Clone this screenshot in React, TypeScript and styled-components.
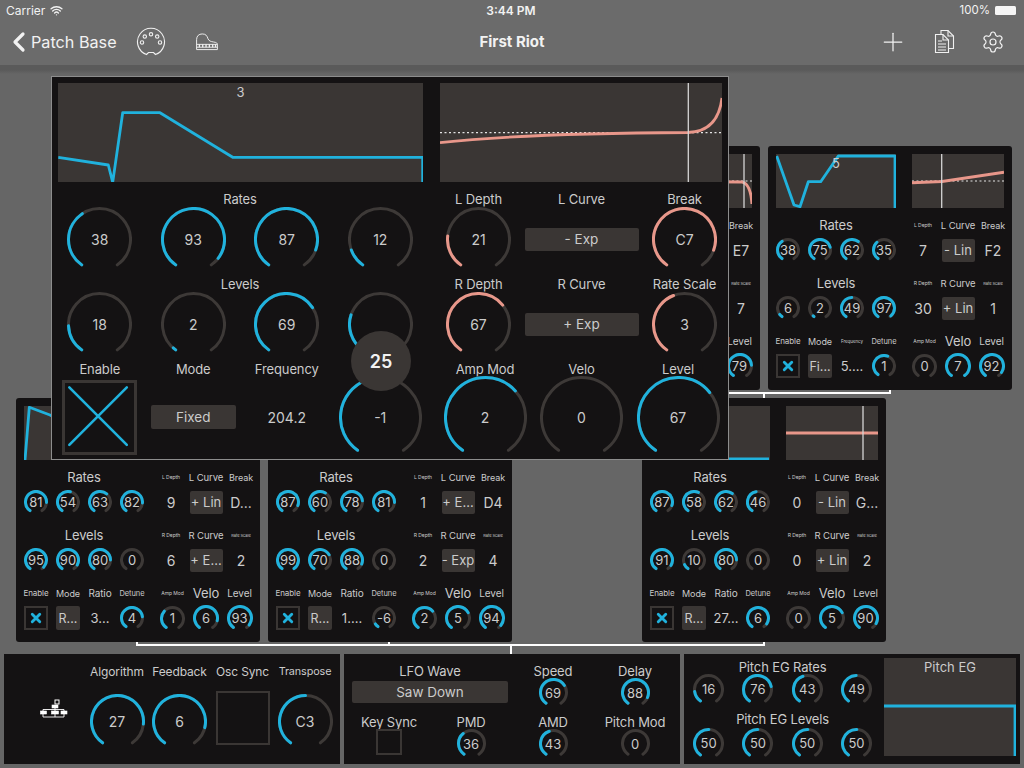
import React from "react";
import styled, { createGlobalStyle } from "styled-components";
import { ChevronLeft, Plus, Settings, Wifi } from "lucide-react";

const BLUE = "#20b2dd";
const SALMON = "#e8978a";
const TRACK = "#3d3937";
const PANEL = "#141213";
const WELL = "#3a3634";
const TEXT = "#cbcbcb";

const GlobalStyle = createGlobalStyle`
  html, body { margin: 0; padding: 0; background: #666; }
  body { font-family: Inter, "Open Sans", sans-serif; color: ${TEXT}; }
  * { box-sizing: border-box; }
`;

/* ===== styled-components used by other styles ===== */

const Section = styled.div<{ $big: boolean }>`
  display: flex;
  flex-direction: column;
  gap: ${({ $big }) => ($big ? "5px" : "8px")};
  flex: none;
`;

const Cols3 = styled.div<{ $big: boolean; $tight?: boolean }>`
  display: grid;
  justify-content: center;
  width: ${({ $big }) => ($big ? "309px" : "105px")};
  grid-template-rows: minmax(0, 1fr);
  grid-template-columns: repeat(3, ${({ $big, $tight }) =>
    $big ? ($tight ? "96.5px" : "103px") : $tight ? "33.5px" : "35px"});
`;

const Cell = styled.div`
  display: flex;
  align-items: center;
  justify-content: center;
  min-width: 0;
  min-height: 0;
`;

/* ===== little drawings ===== */

const polar = (c: number, r: number, deg: number) => {
  const a = ((deg - 90) * Math.PI) / 180;
  return [c + r * Math.cos(a), c + r * Math.sin(a)];
};

const arc = (c: number, r: number, from: number, to: number) => {
  const [x1, y1] = polar(c, r, from);
  const [x2, y2] = polar(c, r, to);
  return `M${x1} ${y1} A${r} ${r} 0 ${to - from > 180 ? 1 : 0} 1 ${x2} ${y2}`;
};

// knob ring runs 290deg with the gap at the bottom
const Ring = ({ size, stroke, frac, color }: { size: number; stroke: number; frac: number; color: string }) => {
  const c = size / 2;
  const r = c - stroke / 2;
  const end = -145 + 290 * frac;
  return (
    <RingSvg width={size} height={size}>
      <path d={arc(c, r, -145, 145)} fill="none" stroke={TRACK} strokeWidth={stroke} strokeLinecap="round" />
      {frac > 0 && <path d={arc(c, r, -145, end)} fill="none" stroke={color} strokeWidth={stroke} strokeLinecap="round" />}
    </RingSvg>
  );
};

type KnobProps = { size: number; frac: number; value?: string | number; color?: string; font: number };

const Knob = ({ size, frac, value, color = BLUE, font }: KnobProps) => (
  <KnobBox $size={size} $font={font}>
    <Ring size={size} stroke={3} frac={frac} color={color} />
    {value}
  </KnobBox>
);

const CheckBox = ({ size, checked, big }: { size: number; checked?: boolean; big?: boolean }) => (
  <Check $size={size} $big={big}>
    {checked && (
      <svg width="100%" height="100%" viewBox="0 0 24 24">
        {big ? (
          <path d="M1.5 1.5L21.5 21.5M21.5 1.5L1.5 21.5" stroke={BLUE} strokeWidth="0.9" strokeLinecap="round" />
        ) : (
          <path d="M7.5 7.5L16.5 16.5M16.5 7.5L7.5 16.5" stroke={BLUE} strokeWidth="3.4" strokeLinecap="round" />
        )}
      </svg>
    )}
  </Check>
);

const EnvGraph = ({ w, h, points, label }: { w: number; h: number; points: string; label?: string }) => (
  <Graph $w={w} $h={h}>
    <svg width={w} height={h}>
      <polyline points={points} fill="none" stroke={BLUE} strokeWidth="2.8" strokeLinejoin="round" />
    </svg>
    {label && <GraphLabel>{label}</GraphLabel>}
  </Graph>
);

const CurveGraph = ({ w, h, curve, mid, brk, big }: { w: number; h: number; curve: string; mid: number; brk: number; big?: boolean }) => (
  <Graph $w={w} $h={h}>
    <svg width={w} height={h}>
      <line x1={0} x2={w} y1={mid} y2={mid} stroke="#e4e4e4" strokeWidth="1.2" strokeDasharray="2 2.5" />
      <path d={curve} fill="none" stroke={SALMON} strokeWidth={big ? 2.8 : 3} />
      <line x1={brk} x2={brk} y1={0} y2={h} stroke="#d5d5d5" strokeWidth="1.3" />
    </svg>
  </Graph>
);

/* ===== operator panel ===== */

type Op = {
  x: number;
  y: number;
  covered?: boolean;
  env: string;
  envLabel?: string;
  curve: string;
  brk: number;
  rates: number[];
  levels: number[];
  mode: string;
  freq: string;
  detune: number;
  lDepth: number;
  lCurve: string;
  brkNote: string;
  rDepth: number;
  rCurve: string;
  rateScale: number;
  ampMod: number;
  velo: number;
  level: number;
  freqFont?: number;
};

const ops: Op[] = [
  {
    // mostly hidden by the big panel, only the right edge shows
    x: 516, y: 146, covered: true, env: "0,54 30,10 70,10 119,40 119,54", curve: "M0 27.5 L82 28 C88 29 91 36 92 50", brk: 84,
    rates: [70, 60, 50, 40], levels: [99, 80, 60, 0], mode: "R...", freq: "1...", detune: 0,
    lDepth: 0, lCurve: "- Lin", brkNote: "E7", rDepth: 0, rCurve: "+ Lin", rateScale: 7, ampMod: 0, velo: 5, level: 79,
  },
  {
    x: 768, y: 146, env: "0.7,2 18,51 24,52.7 32.3,27.7 44.7,27.7 62.3,2 119,2 119,54", envLabel: "5",
    curve: "M0 28.7 L30 27.5 L92 18.3", brk: 29.7,
    rates: [38, 75, 62, 35], levels: [6, 2, 49, 97], mode: "Fi...", freq: "5....", detune: 1,
    lDepth: 7, lCurve: "- Lin", brkNote: "F2", rDepth: 30, rCurve: "+ Lin", rateScale: 1, ampMod: 0, velo: 7, level: 92, freqFont: 4.5,
  },
  {
    x: 16, y: 398, env: "1,54 5.3,1.3 26,9 60,27 118,27 118,54", curve: "M0 27 L92 27", brk: 60,
    rates: [81, 54, 63, 82], levels: [95, 90, 80, 0], mode: "R...", freq: "3...", detune: 4,
    lDepth: 9, lCurve: "+ Lin", brkNote: "D...", rDepth: 6, rCurve: "+ E...", rateScale: 2, ampMod: 1, velo: 6, level: 93,
  },
  {
    x: 268, y: 398, env: "0,54 20,8 60,8 90,27 119,27 119,54", curve: "M0 27 L92 27", brk: 50,
    rates: [87, 60, 78, 81], levels: [99, 70, 88, 0], mode: "R...", freq: "1....", detune: -6,
    lDepth: 1, lCurve: "+ E...", brkNote: "D4", rDepth: 2, rCurve: "- Exp", rateScale: 4, ampMod: 2, velo: 5, level: 94,
  },
  {
    x: 642, y: 398, env: "0,53 119,53", curve: "M0 27 L92 27", brk: 77,
    rates: [87, 58, 62, 46], levels: [91, 10, 80, 0], mode: "R...", freq: "27...", detune: 6,
    lDepth: 0, lCurve: "- Lin", brkNote: "G...", rDepth: 0, rCurve: "+ Lin", rateScale: 2, ampMod: 0, velo: 5, level: 90,
  },
];

const MiniOp = ({ op }: { op: Op }) => {
  const k = (v: number) => <Knob size={24} font={13} frac={v / 99} value={v} />;
  return (
    <Window $x={op.x} $y={op.y} $w={244} $h={244} $big={false}>
      <GraphRow $big={false}>
        <EnvGraph w={120} h={54} points={op.env} label={op.envLabel} />
        <CurveGraph w={92} h={54} curve={op.curve} mid={27} brk={op.brk} />
      </GraphRow>
      <Body $big={false} $covered={op.covered}>
        <Section $big={false}>
          <Group $big={false}>
            <Title $size={13}>Rates</Title>
            <Cols $big={false}>{op.rates.map((v, i) => <Cell key={i}>{k(v)}</Cell>)}</Cols>
          </Group>
          <Group $big={false}>
            <Title $size={13}>Levels</Title>
            <Cols $big={false}>{op.levels.map((v, i) => <Cell key={i}>{k(v)}</Cell>)}</Cols>
          </Group>
          <Group $big={false}>
            <Cols $big={false}>
              <Title $size={8}>Enable</Title>
              <Title $size={9}>Mode</Title>
              <Title $size={op.freqFont ?? 10}>{op.freqFont ? "Frequency" : "Ratio"}</Title>
              <Title $size={7.5}>Detune</Title>
            </Cols>
            <Cols $big={false}>
              <Cell><CheckBox size={24} checked /></Cell>
              <Cell><MiniMode>{op.mode}</MiniMode></Cell>
              <Cell><Value $size={13}>{op.freq}</Value></Cell>
              <Cell><Knob size={24} font={13} frac={(op.detune + 7) / 14} value={op.detune} /></Cell>
            </Cols>
          </Group>
        </Section>
        <Section $big={false}>
          <Group $big={false}>
            <Cols3 $big={false}>
              <Title $size={5}>L Depth</Title>
              <Title $size={9.5}>L Curve</Title>
              <Title $size={9}>Break</Title>
            </Cols3>
            <Cols3 $big={false}>
              <Cell><Value $size={14}>{op.lDepth}</Value></Cell>
              <Cell><CurveBtn $big={false}>{op.lCurve}</CurveBtn></Cell>
              <Cell><Value $size={14}>{op.brkNote}</Value></Cell>
            </Cols3>
          </Group>
          <Group $big={false}>
            <Cols3 $big={false}>
              <Title $size={5}>R Depth</Title>
              <Title $size={9.5}>R Curve</Title>
              <Title $size={4}>Rate Scale</Title>
            </Cols3>
            <Cols3 $big={false}>
              <Cell><Value $size={14}>{op.rDepth}</Value></Cell>
              <Cell><CurveBtn $big={false}>{op.rCurve}</CurveBtn></Cell>
              <Cell><Value $size={14}>{op.rateScale}</Value></Cell>
            </Cols3>
          </Group>
          <Group $big={false}>
            <Cols3 $big={false} $tight>
              <Title $size={5}>Amp Mod</Title>
              <Title $size={13}>Velo</Title>
              <Title $size={10}>Level</Title>
            </Cols3>
            <Cols3 $big={false} $tight>
              <Cell><Knob size={25} font={13} frac={op.ampMod / 3} value={op.ampMod} /></Cell>
              <Cell><Knob size={26} font={13} frac={op.velo / 7} value={op.velo} /></Cell>
              <Cell><Knob size={26} font={13} frac={op.level / 99} value={op.level} /></Cell>
            </Cols3>
          </Group>
        </Section>
      </Body>
    </Window>
  );
};

const BigOp = () => {
  const k = (v: number, show = true) => (
    <Knob size={65} font={14} frac={v / 99} value={show ? v : ""} />
  );
  return (
    <Window $x={51} $y={76} $w={678} $h={384} $big>
      <GraphRow $big>
        <EnvGraph
          w={365}
          h={99}
          label="3"
          points="0.3,74.3 50.3,82 54.7,99.3 64.7,29.7 102,29.7 174.7,74.3 364.7,74.3 364.7,99"
        />
        <CurveGraph w={282} h={99} big mid={49.7} brk={248.3} curve="M0 59.7 C60 53 150 50 248 49.5 C266 49 279 40 282 15" />
      </GraphRow>
      <Body $big>
        <Section $big>
          <Group $big>
            <Title $size={13}>Rates</Title>
            <Cols $big>{[38, 93, 87, 12].map((v) => <Cell key={v}>{k(v)}</Cell>)}</Cols>
          </Group>
          <Group $big>
            <Title $size={13}>Levels</Title>
            <Cols $big>
              <Cell>{k(18)}</Cell>
              <Cell>{k(2)}</Cell>
              <Cell>{k(69)}</Cell>
              <Cell>{k(25, false)}</Cell>
            </Cols>
          </Group>
          <Group $big>
            <Cols $big>
              <Title $size={13}>Enable</Title>
              <Title $size={13}>Mode</Title>
              <Title $size={13}>Frequency</Title>
              <Title $size={13} $under>Detune</Title>
            </Cols>
            <Cols $big>
              <Cell><CheckBox size={75} big checked /></Cell>
              <Cell><FixedBtn>Fixed</FixedBtn></Cell>
              <Cell><Value $size={14}>204.2</Value></Cell>
              <Cell><Knob size={83} font={14} frac={6 / 14} value={-1} /></Cell>
            </Cols>
          </Group>
        </Section>
        <Section $big>
          <Group $big>
            <Cols3 $big>
              <Title $size={13}>L Depth</Title>
              <Title $size={13}>L Curve</Title>
              <Title $size={13}>Break</Title>
            </Cols3>
            <Cols3 $big>
              <Cell><Knob size={65} font={14} frac={21 / 99} value={21} color={SALMON} /></Cell>
              <Cell><CurveBtn $big>- Exp</CurveBtn></Cell>
              <Cell><Knob size={65} font={14} frac={0.88} value="C7" color={SALMON} /></Cell>
            </Cols3>
          </Group>
          <Group $big>
            <Cols3 $big>
              <Title $size={13}>R Depth</Title>
              <Title $size={13}>R Curve</Title>
              <Title $size={13}>Rate Scale</Title>
            </Cols3>
            <Cols3 $big>
              <Cell><Knob size={65} font={14} frac={67 / 99} value={67} color={SALMON} /></Cell>
              <Cell><CurveBtn $big>+ Exp</CurveBtn></Cell>
              <Cell><Knob size={65} font={14} frac={3 / 7} value={3} color={SALMON} /></Cell>
            </Cols3>
          </Group>
          <Group $big>
            <Cols3 $big $tight>
              <Title $size={13}>Amp Mod</Title>
              <Title $size={13}>Velo</Title>
              <Title $size={13}>Level</Title>
            </Cols3>
            <Cols3 $big $tight>
              <Cell><Knob size={83} font={14} frac={2 / 3} value={2} /></Cell>
              <Cell><Knob size={83} font={14} frac={0} value={0} /></Cell>
              <Cell><Knob size={83} font={14} frac={67 / 99} value={67} /></Cell>
            </Cols3>
          </Group>
        </Section>
      </Body>
      <Bubble>25</Bubble>
    </Window>
  );
};

/* ===== app ===== */

export default function App() {
  return (
    <Page>
      <GlobalStyle />
      <Header>
        <StatusBar>
          <StatusLeft>Carrier <Wifi size={13} strokeWidth={2.6} /></StatusLeft>
          <Clock>3:44 PM</Clock>
          <StatusRight>100% <Battery /></StatusRight>
        </StatusBar>
        <NavBar>
          <NavLeft>
            <BackLink><ChevronLeft size={32} strokeWidth={2.4} />Patch Base</BackLink>
            <MidiIcon />
            <PianoIcon />
          </NavLeft>
          <NavTitle>First Riot</NavTitle>
          <NavRight>
            <Plus size={30} strokeWidth={1} />
            <DocsIcon />
            <Settings size={24} strokeWidth={1.2} />
          </NavRight>
        </NavBar>
      </Header>

      <Canvas>
        <Wires width={1024} height={588} viewBox="0 66 1024 588">
          <path
            d="M137 642V645H764V642M389 642V645M511 645V654M640 393H890V390M764 393V398M638 390V393"
            fill="none"
            stroke="#fff"
            strokeWidth="2"
          />
        </Wires>
        {ops.map((op) => <MiniOp key={op.x} op={op} />)}
        <BigOp />
      </Canvas>

      <BottomRow>
        <GlobalPanel>
          <IconCell><AlgoIcon /></IconCell>
          <AlgoCell>
            <Title $size={12}>Algorithm</Title>
            <Knob size={55} font={14} frac={0.83} value={27} />
          </AlgoCell>
          <AlgoCell>
            <Title $size={12}>Feedback</Title>
            <Knob size={55} font={14} frac={6 / 7} value={6} />
          </AlgoCell>
          <AlgoCell $raised>
            <Title $size={12}>Osc Sync</Title>
            <CheckBox size={54} />
          </AlgoCell>
          <AlgoCell>
            <Title $size={10.8}>Transpose</Title>
            <Knob size={55} font={14} frac={0.5} value="C3" />
          </AlgoCell>
        </GlobalPanel>

        <LfoPanel>
          <LfoWave>
            <Title $size={13}>LFO Wave</Title>
            <WaveBtn>Saw Down</WaveBtn>
          </LfoWave>
          <LfoCell>
            <Title $size={13}>Speed</Title>
            <Knob size={29} font={13} frac={69 / 99} value={69} />
          </LfoCell>
          <LfoCell>
            <Title $size={13}>Delay</Title>
            <Knob size={29} font={13} frac={88 / 99} value={88} />
          </LfoCell>
          <KeySync>
            <Title $size={13}>Key Sync</Title>
            <CheckBox size={26} />
          </KeySync>
          <LfoCell>
            <Title $size={13}>PMD</Title>
            <Knob size={29} font={13} frac={36 / 99} value={36} />
          </LfoCell>
          <LfoCell>
            <Title $size={13}>AMD</Title>
            <Knob size={29} font={13} frac={43 / 99} value={43} />
          </LfoCell>
          <LfoCell>
            <Title $size={13}>Pitch Mod</Title>
            <Knob size={29} font={13} frac={0} value={0} />
          </LfoCell>
        </LfoPanel>

        <PitchPanel>
          <PitchKnobs>
            <PitchTitle><Title $size={13}>Pitch EG Rates</Title></PitchTitle>
            {[16, 76, 43, 49].map((v) => (
              <Cell key={v}><Knob size={31} font={13} frac={v / 99} value={v} /></Cell>
            ))}
            <PitchTitle $pushed><Title $size={13}>Pitch EG Levels</Title></PitchTitle>
            {[0, 1, 2, 3].map((i) => (
              <Cell key={i}><Knob size={31} font={13} frac={50 / 99} value={50} /></Cell>
            ))}
          </PitchKnobs>
          <Graph $w={132} $h={98}>
            <svg width={132} height={98}>
              <polyline points="0,48 131,48 131,98" fill="none" stroke={BLUE} strokeWidth="2.8" />
            </svg>
            <GraphLabel>Pitch EG</GraphLabel>
          </Graph>
        </PitchPanel>
      </BottomRow>
    </Page>
  );
}

const MidiIcon = () => (
  <svg width="30" height="30" viewBox="0 0 30 30" fill="none" stroke="#f0f0f0" strokeWidth="1.1">
    <path d="M10.5 27.5A13.5 13.5 0 1 1 19.5 27.5L17.5 25.5H12.5Z" />
    <circle cx="6" cy="15.5" r="1.7" />
    <circle cx="8.8" cy="9.6" r="1.7" />
    <circle cx="15" cy="7.3" r="1.7" />
    <circle cx="21.2" cy="9.6" r="1.7" />
    <circle cx="24" cy="15.5" r="1.7" />
  </svg>
);

const PianoIcon = () => (
  <svg width="24" height="18" viewBox="0 0 24 19" fill="none" stroke="#f0f0f0" strokeWidth="1">
    <path d="M1 17.5V7C1 3 3.5 1 7 1C11 1 12 3 13 6C14 8.5 16 9 19 9.5C22 10 23 10.5 23 12.5V17.5Z" />
    <path d="M1 12H23M1 15H23" />
    <path d="M4 12V15M7.5 12V15M11 12V15M14.5 12V15M18 12V15M21 12V15" strokeWidth="1.4" />
  </svg>
);

const DocsIcon = () => (
  <svg width="21" height="25" viewBox="0 0 21 25" fill="none" stroke="#f0f0f0" strokeWidth="1.1">
    <path d="M7 5V1.5H14L19.5 7V19.5H15" />
    <path d="M14 1.5V7H19.5" />
    <path d="M1.5 5.5H9L14.5 11V23.5H1.5Z" fill="#6a6a6a" />
    <path d="M9 5.5V11H14.5" />
    <path d="M4 12H8M4 15H12M4 18H12M4 21H12" />
  </svg>
);

const AlgoIcon = () => (
  <svg width="28" height="21" viewBox="0 0 28 21" fill="#fff" stroke="#fff">
    <rect x="15" y="1" width="4" height="4" fill="none" strokeWidth="1" />
    <rect x="12" y="6" width="6" height="3" strokeWidth="0.6" />
    <path d="M3 10.5H24M15 9V18M3 10.5V13M24 10.5V13" strokeWidth="0.9" fill="none" />
    <rect x="0.5" y="12" width="6" height="3" strokeWidth="0.6" />
    <rect x="11.5" y="12" width="7" height="3" strokeWidth="0.6" />
    <rect x="21" y="12" width="6" height="3" strokeWidth="0.6" />
    <path d="M3 15V18H24V15" strokeWidth="0.9" fill="none" />
  </svg>
);

/* ===== styled-components ===== */

const Page = styled.div`
  width: 1024px;
  height: 768px;
  display: flex;
  flex-direction: column;
  overflow: hidden;
  background: #666;
`;

const Header = styled.header`
  background: #6b6b6b;
  color: #f2f2f2;
  border-bottom: 1px solid #5a5a5a;
`;

const StatusBar = styled.div`
  height: 20px;
  padding: 0 8px 0 6px;
  display: grid;
  grid-template-columns: 1fr auto 1fr;
  align-items: center;
  font-size: 12px;
`;

const StatusLeft = styled.div`
  display: flex;
  align-items: center;
  gap: 5px;
`;

const Clock = styled.div`
  font-weight: 600;
  font-size: 12px;
`;

const StatusRight = styled.div`
  display: flex;
  justify-content: flex-end;
  align-items: center;
  gap: 5px;
  font-size: 11.5px;
`;

const Battery = styled.span`
  width: 21px;
  height: 9px;
  background: #f5f5f5;
  border-radius: 1.5px;
`;

const NavBar = styled.nav`
  height: 45px;
  padding: 0 19px 2px 19px;
  display: grid;
  grid-template-columns: 1fr auto 1fr;
  align-items: center;
`;

const NavLeft = styled.div`
  display: flex;
  align-items: center;
  gap: 19px;
  margin-left: -15px;
  & > svg:last-child { margin-left: 10px; }
`;

const BackLink = styled.div`
  display: flex;
  align-items: center;
  font-size: 16.2px;
  & > svg { margin-right: -4px; margin-left: -1px; }
`;

const NavTitle = styled.div`
  font-weight: 700;
  font-size: 15px;
`;

const NavRight = styled.div`
  display: flex;
  justify-content: flex-end;
  align-items: center;
  gap: 26px;
`;

const Canvas = styled.main`
  position: relative;
  flex: 1;
  background: linear-gradient(#5a5a5a 0, #5a5a5a 4px, #666 8px);
`;

const Wires = styled.svg`
  position: absolute;
  left: 0;
  top: 0;
  overflow: visible;
`;

const Window = styled.section<{ $x: number; $y: number; $w: number; $h: number; $big: boolean }>`
  position: absolute;
  left: ${({ $x }) => $x}px;
  top: ${({ $y }) => $y - 66}px;
  width: ${({ $w }) => $w}px;
  height: ${({ $h }) => $h}px;
  background: ${PANEL};
  border-radius: ${({ $big }) => ($big ? "0" : "3px")};
  outline: ${({ $big }) => ($big ? "1px solid #8d8d8d" : "none")};
  outline-offset: -1px;
`;

const GraphRow = styled.div<{ $big: boolean }>`
  display: flex;
  justify-content: space-between;
  padding: ${({ $big }) => ($big ? "7px 7px 0" : "8px 8px 0")};
`;

const Graph = styled.div<{ $w: number; $h: number }>`
  position: relative;
  flex: none;
  width: ${({ $w }) => $w}px;
  height: ${({ $h }) => $h}px;
  background: ${WELL};
  & > svg { display: block; }
`;

const GraphLabel = styled.span`
  position: absolute;
  left: 0;
  right: 0;
  top: 1px;
  text-align: center;
  font-size: 13px;
`;

// the panel under the big one only shows its last column
const Body = styled.div<{ $big: boolean; $covered?: boolean }>`
  display: flex;
  padding-left: ${({ $big }) => ($big ? "2px" : "4px")};
  padding-top: ${({ $big }) => ($big ? "5px" : "9px")};
  column-gap: ${({ $big }) => ($big ? "0" : "5.5px")};
  ${({ $covered }) =>
    $covered &&
    `
    & > div:first-child { visibility: hidden; }
    & > div:last-child > div > div > *:not(:last-child) { visibility: hidden; }
  `}
`;

const Group = styled.div<{ $big: boolean }>`
  display: grid;
  grid-template-rows: ${({ $big }) => ($big ? "24px 56px" : "16px 34px")};
  min-height: 0;
  &:last-child { grid-template-rows: ${({ $big }) => ($big ? "24px 72px" : "16px 34px")}; }
`;

const Cols = styled.div<{ $big: boolean }>`
  display: grid;
  grid-template-rows: minmax(0, 1fr);
  grid-template-columns: repeat(4, ${({ $big }) => ($big ? "93.5px" : "32px")});
  min-height: 0;
`;

// $under: the label sits behind the value bubble
const Title = styled.div<{ $size: number; $under?: boolean }>`
  display: flex;
  align-items: center;
  justify-content: center;
  white-space: nowrap;
  font-size: ${({ $size }) => $size}px;
  letter-spacing: -0.01em;
  height: 100%;
  color: ${TEXT};
  ${({ $under }) => $under && "visibility: hidden;"}
`;

const Value = styled.span<{ $size: number }>`
  font-size: ${({ $size }) => $size}px;
  white-space: nowrap;
`;

const KnobBox = styled.div<{ $size: number; $font: number }>`
  position: relative;
  flex: none;
  width: ${({ $size }) => $size}px;
  height: ${({ $size }) => $size}px;
  display: flex;
  align-items: center;
  justify-content: center;
  font-size: ${({ $font }) => $font}px;
  white-space: nowrap;
`;

const RingSvg = styled.svg`
  position: absolute;
  left: 0;
  top: 0;
`;

const Check = styled.div<{ $size: number; $big?: boolean }>`
  flex: none;
  width: ${({ $size }) => $size}px;
  height: ${({ $size }) => $size}px;
  border: ${({ $big }) => ($big ? "3px" : "2px")} solid ${WELL};
  & > svg { display: block; }
`;

const MiniMode = styled.div`
  width: 24px;
  height: 24px;
  background: ${WELL};
  border-radius: 2px;
  display: flex;
  align-items: center;
  justify-content: center;
  font-size: 12.5px;
  white-space: nowrap;
`;

const CurveBtn = styled.div<{ $big: boolean }>`
  flex: none;
  width: ${({ $big }) => ($big ? "114px" : "33px")};
  height: 23px;
  background: ${WELL};
  border-radius: 2px;
  display: flex;
  align-items: center;
  justify-content: center;
  font-size: ${({ $big }) => ($big ? "13.5px" : "13px")};
  white-space: nowrap;
`;

const FixedBtn = styled.div`
  width: 85px;
  height: 24px;
  background: ${WELL};
  border-radius: 2px;
  display: flex;
  align-items: center;
  justify-content: center;
  font-size: 13.5px;
`;

const Bubble = styled.div`
  position: absolute;
  left: 300px;
  top: 255px;
  width: 60px;
  height: 60px;
  border-radius: 50%;
  background: ${WELL};
  color: #f2f2f2;
  font-size: 18px;
  font-weight: 600;
  display: flex;
  align-items: center;
  justify-content: center;
`;

const BottomRow = styled.footer`
  flex: none;
  display: flex;
  gap: 4px;
  padding: 0 4px 4px;
`;

const GlobalPanel = styled.div`
  flex: none;
  width: 336px;
  height: 110px;
  background: ${PANEL};
  display: grid;
  grid-template-columns: 82px 62px 63px 63px 62px;
  padding-top: 8px;
`;

const IconCell = styled.div`
  display: flex;
  align-items: center;
  justify-content: center;
  padding: 0 0 8px 18px;
`;

const AlgoCell = styled.div<{ $raised?: boolean }>`
  display: grid;
  grid-template-rows: 18px 1fr;
  justify-items: center;
  align-items: center;
  padding-bottom: ${({ $raised }) => ($raised ? "9px" : "1px")};
`;

const LfoPanel = styled.div`
  flex: none;
  width: 336px;
  height: 110px;
  background: ${PANEL};
  display: grid;
  grid-template-columns: 82px 82px 82px 82px;
  grid-template-rows: 51px 51px;
  padding: 8px 0 0 4px;
`;

const LfoWave = styled.div`
  grid-column: span 2;
  display: grid;
  grid-template-rows: 18px 22px;
  row-gap: 1px;
  justify-items: center;
`;

const WaveBtn = styled.div`
  width: 156px;
  height: 22px;
  background: ${WELL};
  border-radius: 2px;
  display: flex;
  align-items: center;
  justify-content: center;
  font-size: 13.5px;
`;

const LfoCell = styled.div`
  display: grid;
  grid-template-rows: 18px 29px;
  justify-items: center;
  & > :last-child { margin-top: -2px; }
`;

const KeySync = styled.div`
  display: grid;
  grid-template-rows: 18px 26px;
  justify-items: center;
  & > :last-child { margin-top: -2px; }
`;

const PitchPanel = styled.div`
  flex: none;
  width: 336px;
  height: 110px;
  background: ${PANEL};
  display: flex;
  justify-content: space-between;
  align-items: flex-start;
  padding: 4px 4px 0 0;
`;

const PitchKnobs = styled.div`
  width: 196px;
  display: grid;
  grid-template-columns: repeat(4, 49.3px);
  grid-template-rows: 18px 26px 26px 30px;
`;

const PitchTitle = styled.div<{ $pushed?: boolean }>`
  grid-column: 1 / -1;
  padding-top: ${({ $pushed }) => ($pushed ? "8px" : "0")};
`;
